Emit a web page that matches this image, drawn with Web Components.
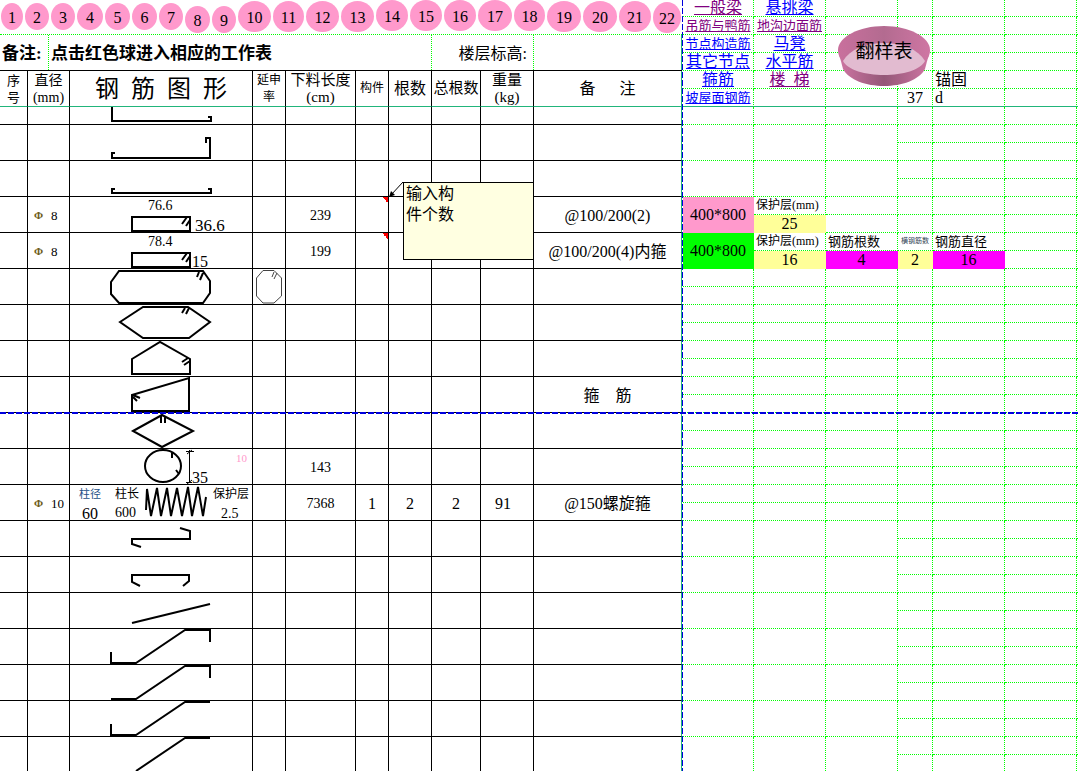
<!DOCTYPE html>
<html lang="zh-CN">
<head>
<meta charset="utf-8">
<title>翻样表</title>
<style>
    body {
        margin: 0;
        background: #fff;
        color: #000;
        font-family: "Liberation Serif", "Noto Sans CJK SC", serif;
        font-size: 16px;
        --grid: #00ff00;
        --freeze: #21b57b;
        --pink: #ff99cc;
        --break: #0000dd;
    }
</style>
</head>
<body>
<work-sheet>
    <ball-row slot="left"></ball-row>
    <remark-row slot="left">
        <b slot="label">备注:</b>
        <b slot="text">点击红色球进入相应的工作表</b>
        <span slot="level">楼层标高:</span>
    </remark-row>
    <rebar-table slot="left"></rebar-table>
    <side-table slot="right"></side-table>
    <bowl-button slot="right">翻样表</bowl-button>
</work-sheet>

<script>
class WorkSheet extends HTMLElement {
    constructor() {
        super();
        const shadow = this.attachShadow({ mode: 'open' });
        shadow.innerHTML = `
            <style>
                :host {
                    display: grid;
                    grid-template-columns: minmax(0, 682fr) 1px minmax(0, 395fr);
                    position: relative;
                    height: 100vh;
                    overflow: hidden;
                }
                .right {
                    position: relative;
                }
                .vertical {
                    background: repeating-linear-gradient(to bottom, var(--break) 0 6px, #fff 6px 8px);
                }
                .horizontal {
                    position: absolute;
                    left: 0;
                    right: 0;
                    top: 412px;
                    height: 2px;
                    background: repeating-linear-gradient(to right, var(--break) 0 6px, transparent 6px 8px);
                }
            </style>
            <div class="left"><slot name="left"></slot></div>
            <div class="vertical"></div>
            <div class="right"><slot name="right"></slot></div>
            <div class="horizontal"></div>
        `;
    }
}

class SheetBall extends HTMLElement {
    constructor() {
        super();
        const shadow = this.attachShadow({ mode: 'open' });
        shadow.innerHTML = `
            <style>
                :host {
                    display: block;
                    padding: 0 1px;
                }
                a {
                    display: block;
                    height: 27px;
                    line-height: 29px;
                    border-radius: 50%;
                    background: var(--pink);
                    color: #000;
                    text-align: center;
                    text-decoration: none;
                }
                :host([big]) a {
                    height: 31px;
                    line-height: 33px;
                }
            </style>
            <a href="#"><slot></slot></a>
        `;
    }
}

class BallRow extends HTMLElement {
    constructor() {
        super();
        const shadow = this.attachShadow({ mode: 'open' });
        const widths = [24, 26, 26, 28, 27, 27, 26, 27, 26, 35, 33, 35, 35, 34, 34, 34, 36, 33, 36, 36, 34, 30];
        const high = [14, 15, 16, 17, 18];
        const low = [8, 9, 22];
        const balls = widths.map((w, i) => {
            const n = i + 1;
            const place = high.includes(n) ? 'high' : low.includes(n) ? 'low' : '';
            return `<sheet-ball class="${place}" ${n > 9 ? 'big' : ''}>${n}</sheet-ball>`;
        }).join('');
        shadow.innerHTML = `
            <style>
                :host {
                    display: grid;
                    grid-template-columns: ${widths.map(w => `minmax(0, ${w}fr)`).join(' ')};
                    align-items: center;
                    box-sizing: border-box;
                    height: 35px;
                    padding-bottom: 1px;
                    border-bottom: 1px dotted var(--grid);
                }
                .high { align-self: start; }
                .low { align-self: end; }
            </style>
            ${balls}
        `;
    }
}

class RemarkRow extends HTMLElement {
    constructor() {
        super();
        const shadow = this.attachShadow({ mode: 'open' });
        shadow.innerHTML = `
            <style>
                :host {
                    display: grid;
                    grid-template-columns: 49fr 383fr 102fr 148fr;
                    box-sizing: border-box;
                    height: 36px;
                    line-height: 37px;
                    border-bottom: 1px solid #000;
                }
                div {
                    border-right: 1px dotted var(--grid);
                    padding: 0 2px;
                    white-space: nowrap;
                    min-width: 0;
                    height: 35px;
                }
                .bold {
                    font-size: 17px;
                }
                .level {
                    text-align: right;
                    padding-right: 6px;
                }
                div:last-child {
                    border-right: 1px solid var(--freeze);
                }
            </style>
            <div class="bold"><slot name="label"></slot></div>
            <div class="bold"><slot name="text"></slot></div>
            <div class="level"><slot name="level"></slot></div>
            <div></div>
        `;
    }
}

// outlines of the bars, one drawing per row of the table
const shapes = {
    lHook: '<path d="M42 0V14H141V10H138"/>',
    uHook: '<path d="M45 28H42V33H140V13H136V18"/>',
    flatHook: '<path d="M45 28H42V32H141V28H138"/>',
    box: '<path d="M62 20H120V34H62ZM117 20L112 27M120 23L116 29"/>',
    octagon: '<path d="M49 2H133L140 12V24L133 34H49L41 25V13ZM129 3L127 8M133 4L130 11"/>',
    hexagon: '<path d="M50 17L73 2H118L140 17L119 33H73ZM115 3L112 8M119 3L116 9"/>',
    house: '<path d="M62 18L90 1L120 18V33H62ZM118 17L112 21M120 20L114 24"/>',
    slope: '<path d="M62 18L119 1V34H62ZM63 18L70 21M63 20L67 24"/>',
    diamond: '<path d="M63 18L92 2L123 18L92 34ZM91 3V10M95 3V10"/>',
    circle: '<ellipse cx="93" cy="17" rx="18" ry="16"/><path d="M102 4V9M106 21L109 25"/><path class="thin" d="M119.500 1V34M116 2.500H124M117 5L122 1M116 33.500H122M117 35L122 31"/>',
    spring: '<path d="M76 25L77 4L81 31L87 3L91 31L97 3L101 31L107 3L112 31L118 2L122 31L128 2L133 31L136 12"/>',
    sBar: '<path d="M110 7L120 10V18H62V23L71 26"/>',
    cBar: '<path d="M70 29L62 25V18H119V24L113 29"/>',
    line: '<path d="M62 30L140 11"/>',
    bendBoth: '<path d="M41 23V34H66L115 1H140V13"/>',
    bendRight: '<path d="M41 34H66L115 1H140V13"/>',
    bendLeft: '<path d="M41 23V34H66L115 1H140"/>',
    bend: '<path d="M66 34L115 1H140"/>',
    small: '<path class="gray" d="M10 1.500H21L28.500 9V27L21 34H10L3.500 27V9ZM21 3L19 8M24 4L21 10"/>'
};

class BarShape extends HTMLElement {
    connectedCallback() {
        const shadow = this.attachShadow({ mode: 'open' });
        const labels = JSON.parse(this.getAttribute('labels') || '[]');
        const height = this.getAttribute('height') || 35;
        shadow.innerHTML = `
            <style>
                :host { display: block; }
                svg {
                    display: block;
                    overflow: visible;
                }
                path, ellipse {
                    fill: none;
                    stroke: #000;
                    stroke-width: 2;
                }
                .thin { stroke-width: 1; }
                .gray {
                    stroke: #444;
                    stroke-width: 1;
                }
            </style>
            <svg width="100%" height="${height}">
                ${shapes[this.getAttribute('kind')]}
                ${labels.map(([text, x, y, size, color]) =>
                    `<text x="${x}" y="${y}" font-size="${size}" fill="${color || '#000'}">${text}</text>`).join('')}
            </svg>
        `;
    }
}

class CellNote extends HTMLElement {
    constructor() {
        super();
        const shadow = this.attachShadow({ mode: 'open' });
        shadow.innerHTML = `
            <style>
                :host {
                    position: absolute;
                    z-index: 1;
                    left: 47px;
                    top: -15px;
                    width: 131px;
                    height: 78px;
                    box-sizing: border-box;
                    border: 1px solid #000;
                    background: #ffffe1;
                    padding: 0 2px;
                    line-height: 21px;
                    text-align: left;
                }
                svg {
                    position: absolute;
                    left: -16px;
                    top: -1px;
                }
            </style>
            <slot></slot>
            <svg width="16" height="16">
                <path d="M15 0L3 13" stroke="#000" fill="none"/>
                <path d="M1 15L3 9L7 13Z"/>
            </svg>
        `;
    }
}

class RebarTable extends HTMLElement {
    constructor() {
        super();
        const shadow = this.attachShadow({ mode: 'open' });
        const bar = (d) => `<span class="bar"><i>Φ</i>${d}</span>`;
        const rows = [
            { kind: 'lHook', height: 17 },
            { kind: 'uHook' },
            { kind: 'flatHook' },
            { bar: 8, kind: 'box', labels: [['76.6', 78, 13, 14], ['36.6', 125, 34, 17]], length: 239, remark: '@100/200(2)',
              part: '<cell-note>输入构<br>件个数</cell-note>', flag: true },
            { bar: 8, kind: 'box', labels: [['78.4', 78, 13, 14], ['15', 122, 34, 16]], length: 199, remark: '@100/200(4)内箍', flag: true },
            { kind: 'octagon', extra: '<bar-shape kind="small"></bar-shape>' },
            { kind: 'hexagon' },
            { kind: 'house' },
            { kind: 'slope', remark: '箍&emsp;筋' },
            { kind: 'diamond' },
            { kind: 'circle', labels: [['35', 122, 34, 16], ['10', 166, 13, 11, '#ff99cc']], length: 143 },
            { bar: 10, kind: 'spring', length: 7368, part: 1, count: 2, total: 2, weight: 91, remark: '@150螺旋箍',
              labels: [['柱径', 9, 13, 11, '#234f86'], ['60', 12, 34, 16], ['柱长', 45, 13, 12], ['600', 45, 32, 14],
                  ['保护层', 143, 13, 12], ['2.5', 151, 33, 14]] },
            { kind: 'sBar' },
            { kind: 'cBar' },
            { kind: 'line' },
            { kind: 'bendBoth' },
            { kind: 'bendRight' },
            { kind: 'bendLeft' },
            { kind: 'bend' }
        ];
        const body = rows.map(r => `
            <tr class="${r.height ? 'half' : ''}">
                <td></td>
                <td>${r.bar ? bar(r.bar) : ''}</td>
                <td class="shape"><bar-shape kind="${r.kind}" height="${r.height || 35}" labels='${JSON.stringify(r.labels || [])}'></bar-shape></td>
                <td class="shape">${r.extra || ''}</td>
                <td class="small">${r.length || ''}</td>
                <td class="${r.flag ? 'flag' : ''}">${r.part || ''}</td>
                <td>${r.count || ''}</td>
                <td>${r.total || ''}</td>
                <td class="weight">${r.weight || ''}</td>
                <td>${r.remark || ''}</td>
            </tr>`).join('');
        shadow.innerHTML = `
            <style>
                :host { display: block; }
                table {
                    width: 100%;
                    table-layout: fixed;
                    border-collapse: separate;
                    border-spacing: 0;
                }
                tr { height: 36px; }
                tr.half { height: 18px; }
                th, td {
                    padding: 0;
                    border-right: 1px solid #000;
                    border-bottom: 1px solid #000;
                    font-weight: normal;
                    text-align: center;
                    vertical-align: middle;
                    line-height: 17px;
                    white-space: nowrap;
                }
                td { padding-top: 2px; }
                td.shape { padding-top: 0; }
                td.weight { padding-right: 8px; }
                tr.half td { line-height: 0; }
                th { border-bottom-color: var(--freeze); }
                th:last-child, td:last-child { border-right-color: var(--freeze); }
                .f12 { font-size: 12px; }
                .f13 { font-size: 13px; }
                .f14 { font-size: 14px; }
                .f15 { font-size: 15px; }
                .title {
                    font-size: 24px;
                    line-height: 35px;
                }
                .title span {
                    display: block;
                    padding-top: 2px;
                    line-height: 33px;
                }
                .small { font-size: 14px; }
                .bar {
                    display: grid;
                    grid-template-columns: 17px auto;
                    padding-left: 6px;
                    text-align: left;
                    font-size: 13px;
                }
                .bar i {
                    font-style: normal;
                    font-weight: bold;
                    font-size: 11px;
                    color: #6f5c1c;
                }
                .flag {
                    position: relative;
                    background: linear-gradient(to bottom left, #f00 50%, transparent 50%) top right / 6px 6px no-repeat;
                }
            </style>
            <table>
                <colgroup>
                    ${[28, 42, 183, 33, 70, 33, 43, 49, 53, 148].map(w => `<col style="width: ${w}px">`).join('')}
                </colgroup>
                <thead>
                    <tr>
                        <th class="f13">序<br>号</th>
                        <th class="f14">直径<br>(mm)</th>
                        <th class="title"><span>钢&ensp;筋&ensp;图&ensp;形</span></th>
                        <th class="f12">延申<br>率</th>
                        <th class="f15">下料长度<br>(cm)</th>
                        <th class="f12">构件</th>
                        <th>根数</th>
                        <th class="f15">总根数</th>
                        <th class="f15">重量<br>(kg)</th>
                        <th>备&ensp;&ensp;&ensp;注</th>
                    </tr>
                </thead>
                <tbody>${body}</tbody>
            </table>
        `;
    }
}

class SideTable extends HTMLElement {
    constructor() {
        super();
        const shadow = this.attachShadow({ mode: 'open' });
        const link = (text, cls = '') => `<td><a href="#" class="${cls}">${text}</a></td>`;
        const empty = (n) => '<td></td>'.repeat(n);
        // pairs of rows whose first three columns are merged
        const pair = `<tr>${'<td rowspan="2"></td>'.repeat(3)}${empty(4)}</tr><tr>${empty(4)}</tr>`;
        const single = `<tr>${empty(7)}</tr>`;
        shadow.innerHTML = `
            <style>
                :host { display: block; }
                table {
                    width: 100%;
                    table-layout: fixed;
                    border-collapse: separate;
                    border-spacing: 0;
                }
                tr { height: 18px; }
                tr:first-child { height: 17px; }
                td {
                    padding: 0;
                    border-right: 1px dotted var(--grid);
                    border-bottom: 1px dotted var(--grid);
                    text-align: center;
                    line-height: 17px;
                    white-space: nowrap;
                }
                tr:first-child td { line-height: 16px; }
                td:last-child { border-right: 0; }
                tr.frozen td { border-bottom: 1px solid var(--freeze); }
                a {
                    display: block;
                    color: #0000ff;
                }
                a.seen { color: #800080; }
                .s { font-size: 13px; }
                .xs { font-size: 12px; }
                .tiny {
                    font-size: 7px;
                    color: #345;
                }
                .start {
                    text-align: left;
                    padding-left: 2px;
                }
                .pink, .lime, .yellow, .magenta { border-color: transparent; }
                .pink { background: var(--pink); }
                .lime { background: #00ff00; }
                .yellow { background: #ffff99; }
                .magenta { background: #ff00ff; }
            </style>
            <table>
                <colgroup>
                    ${[71, 72, 72, 35, 72, 72, 1].map(w => `<col style="width: ${w}px">`).join('')}
                </colgroup>
                <tbody>
                    <tr>${link('一般梁', 'seen')}${link('悬挑梁')}${empty(5)}</tr>
                    <tr>${link('吊筋与鸭筋', 's seen')}${link('地沟边面筋', 's seen')}${empty(5)}</tr>
                    <tr>${link('节点构造筋', 's')}${link('马凳')}${empty(5)}</tr>
                    <tr>${link('其它节点')}${link('水平筋')}${empty(5)}</tr>
                    <tr>${link('箍筋')}${link('楼&ensp;梯', 'seen')}${empty(2)}<td class="start">锚固</td>${empty(2)}</tr>
                    <tr class="frozen">${link('坡屋面钢筋', 's')}${empty(2)}<td>37</td><td class="start">d</td>${empty(2)}</tr>
                    ${single}
                    ${pair.repeat(2)}
                    <tr><td rowspan="2" class="pink">400*800</td><td class="start xs">保护层(mm)</td>${empty(5)}</tr>
                    <tr><td class="yellow">25</td>${empty(5)}</tr>
                    <tr>
                        <td rowspan="2" class="lime">400*800</td>
                        <td class="start xs">保护层(mm)</td>
                        <td class="start s">钢筋根数</td>
                        <td class="tiny">横钢筋数</td>
                        <td class="start s">钢筋直径</td>
                        ${empty(2)}
                    </tr>
                    <tr>
                        <td class="yellow">16</td>
                        <td class="magenta">4</td>
                        <td class="yellow">2</td>
                        <td class="magenta">16</td>
                        ${empty(2)}
                    </tr>
                    ${single.repeat(14)}
                    ${pair.repeat(7)}
                </tbody>
            </table>
        `;
    }
}

class BowlButton extends HTMLElement {
    constructor() {
        super();
        const shadow = this.attachShadow({ mode: 'open' });
        shadow.innerHTML = `
            <style>
                :host {
                    position: absolute;
                    left: 155px;
                    top: 26px;
                }
                button {
                    display: grid;
                    place-items: center;
                    width: 92px;
                    height: 60px;
                    padding: 0;
                    border: 0;
                    background: none;
                    color: #000;
                    font: inherit;
                    font-size: 19px;
                    line-height: 20px;
                    cursor: pointer;
                }
                svg, span { grid-area: 1 / 1; }
                span { padding-bottom: 8px; }
            </style>
            <button type="button">
                <svg width="92" height="60">
                    <defs>
                        <linearGradient id="side">
                            <stop offset="0" stop-color="#cf76a3"/>
                            <stop offset="0.500" stop-color="#945878"/>
                            <stop offset="1" stop-color="#cf76a3"/>
                        </linearGradient>
                        <linearGradient id="inner">
                            <stop offset="0" stop-color="#c9709d"/>
                            <stop offset="0.500" stop-color="#b36b90"/>
                            <stop offset="1" stop-color="#cf76a3"/>
                        </linearGradient>
                    </defs>
                    <path d="M0 24L5 43C11 54 28 60 46 60S81 54 87 43L92 24Z" fill="url(#side)"/>
                    <path d="M0 24C0 11 21 0 46 0S92 11 92 24C92 29 90 33 87 36H5C2 33 0 29 0 24Z" fill="url(#inner)"/>
                    <path d="M5 35C12 23 28 17 46 17S80 23 87 35C82 44 65 49 46 49S10 44 5 35Z" fill="#e2bbd0"/>
                </svg>
                <span><slot></slot></span>
            </button>
        `;
    }
}

customElements.define('work-sheet', WorkSheet);
customElements.define('sheet-ball', SheetBall);
customElements.define('ball-row', BallRow);
customElements.define('remark-row', RemarkRow);
customElements.define('bar-shape', BarShape);
customElements.define('cell-note', CellNote);
customElements.define('rebar-table', RebarTable);
customElements.define('side-table', SideTable);
customElements.define('bowl-button', BowlButton);
</script>
</body>
</html>
